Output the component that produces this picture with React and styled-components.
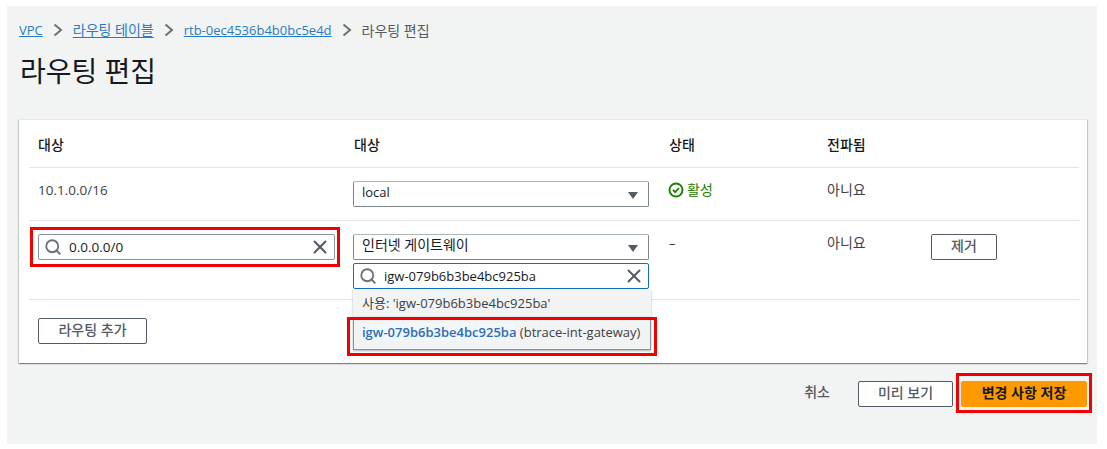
import styled, { createGlobalStyle } from "styled-components";
import { Search, X } from "lucide-react";

const GlobalStyle = createGlobalStyle`
    html, body {
        margin: 0;
        padding: 0;
        background: #fff;
    }
    body {
        font-family: "Open Sans", "Noto Sans CJK KR", sans-serif;
        font-size: 13px;
        color: #16191f;
    }
`;

const Page = styled.div`
    width: 1090px;
    height: 438px;
    margin: 6px 0 0 7px;
    padding: 15px 10px 0 12px;
    box-sizing: border-box;
    background: #f2f3f3;
`;

const Ko = styled.span`
    font-size: 14px;
    vertical-align: 1px;
`;

const Address = styled.span`
    font-size: 13.5px;
`;

const Crumbs = styled.nav`
    display: flex;
    align-items: center;
    height: 17px;
    font-size: 13px;
    color: #545b64;
`;

const CrumbLink = styled.a`
    color: #0f6fc0;
    text-decoration: underline;
    opacity: 0.9;
`;

const CrumbSep = styled.span`
    display: flex;
    width: 30px;
    justify-content: center;
`;

const Title = styled.h1`
    margin: 14px 0 0 1px;
    height: 39px;
    line-height: 39px;
    font-size: 28px;
    font-weight: 400;
    color: #16191f;
`;

const Card = styled.section`
    width: 1068px;
    height: 244px;
    margin-top: 28px;
    box-sizing: border-box;
    padding: 0 8px 0 10px;
    background: #fff;
    border-top: 1px solid #e5e7e8;
    box-shadow: 0 1px 1px 0 rgba(0, 28, 36, 0.3), 1px 1px 1px 0 rgba(0, 28, 36, 0.15),
        -1px 1px 1px 0 rgba(0, 28, 36, 0.15);
`;

const Row = styled.div`
    display: grid;
    grid-template-columns: 316px 315px 158px 104px 1fr;
    height: ${(p) => p.$height}px;
    padding: ${(p) => p.$top}px 0 0 9px;
    box-sizing: border-box;
    border-bottom: ${(p) => (p.$last ? "none" : "1px solid #e2e4e5")};
`;

const Head = styled.div`
    font-size: 14px;
    font-weight: 500;
    line-height: 18px;
    color: #16191f;
`;

const Cell = styled.div`
    position: relative;
    line-height: 18px;
    color: #3b4148;
`;

const Stack = styled.div`
    position: relative;
    display: flex;
    flex-direction: column;
    gap: 3px;
    width: 296px;
    margin-left: -1px;
`;

const Select = styled.div`
    display: flex;
    align-items: center;
    justify-content: space-between;
    height: 26px;
    padding: 0 10px 5px 8px;
    box-sizing: border-box;
    background: #fff;
    border: 1px solid #7d878a;
    border-top-color: #aab7b8;
    border-radius: 2px;
    color: #16191f;
`;

const Caret = styled.span`
    width: 0;
    height: 0;
    margin-top: 7px;
    border-left: 5px solid transparent;
    border-right: 5px solid transparent;
    border-top: 7px solid #545b64;
`;

const SearchBox = styled.div`
    display: flex;
    align-items: center;
    gap: 7px;
    width: ${(p) => (p.$focus ? "auto" : "297px")};
    height: 26px;
    padding: 0 3px 0 5px;
    box-sizing: border-box;
    background: #fff;
    border: 1px solid ${(p) => (p.$focus ? "#0f6fc0" : "#879596")};
    border-radius: 2px;
    color: #16191f;
`;

const SearchText = styled.span`
    flex: 1;
    padding-bottom: 1px;
`;

const Menu = styled.div`
    position: absolute;
    top: 55px;
    left: 0;
    width: 298px;
    z-index: 2;
    background: #fff;
    box-shadow: 0 1px 2px rgba(0, 28, 36, 0.35);
`;

const MenuHint = styled.div`
    height: 28px;
    line-height: 28px;
    padding-left: 9px;
    box-sizing: border-box;
    background: #f2f3f3;
    border-bottom: 1px solid #e2e4e5;
    color: #3b4148;
`;

const MenuOption = styled.div`
    height: 33px;
    line-height: 30px;
    padding-left: 8px;
    box-sizing: border-box;
    background: #f2f3f3;
    border: 1px solid #879596;
    border-top: none;
    color: #3b4148;
`;

const Match = styled.b`
    font-weight: 600;
    color: #2f6db5;
    background: #f1f8fd;
`;

const Status = styled.span`
    display: flex;
    align-items: center;
    gap: 3px;
    margin-left: -1px;
    color: #1d8102;
`;

const Button = styled.button`
    display: block;
    box-sizing: border-box;
    width: ${(p) => p.$width}px;
    height: 26px;
    padding: 0 0 6px;
    background: #fff;
    border: 1px solid #545b64;
    border-radius: 2px;
    font-family: inherit;
    font-size: 14px;
    font-weight: 500;
    color: #545b64;
`;

const Mark = styled.span`
    position: absolute;
    z-index: 3;
    top: ${(p) => p.$top}px;
    left: ${(p) => p.$left}px;
    width: ${(p) => p.$width}px;
    height: ${(p) => p.$height}px;
    box-sizing: border-box;
    border: 3px solid #f00000;
    pointer-events: none;
`;

const Footer = styled.footer`
    display: flex;
    align-items: center;
    justify-content: flex-end;
    width: 1068px;
    margin-top: 18px;
`;

const Cancel = styled.span`
    margin-right: 28px;
    padding-bottom: 6px;
    font-size: 14px;
    font-weight: 500;
    color: #545b64;
`;

const SaveWrap = styled.div`
    position: relative;
    margin-left: 8px;
`;

const SaveButton = styled.button`
    display: block;
    width: 126px;
    height: 26px;
    padding: 0 0 6px;
    background: #ff9900;
    border: 1px solid #ff9900;
    border-radius: 2px;
    font-family: inherit;
    font-size: 14px;
    font-weight: 600;
    color: #16191f;
`;

function CheckIcon() {
    return (
        <svg width="16" height="16" viewBox="0 0 16 16" fill="none" stroke="#1d8102" strokeWidth="2">
            <circle cx="8" cy="8" r="6.5" />
            <path d="M5 8l2.2 2.2L11 6" strokeWidth="1.8" />
        </svg>
    );
}

function Chevron() {
    return (
        <svg width="10" height="14" viewBox="0 0 10 14" fill="none" stroke="#687078" strokeWidth="2">
            <path d="M1.5 1.5L8 7l-6.5 5.5" />
        </svg>
    );
}

export default function App() {
    return (
        <>
            <GlobalStyle />
            <Page>
                <Crumbs>
                    <CrumbLink>VPC</CrumbLink>
                    <CrumbSep><Chevron /></CrumbSep>
                    <CrumbLink><Ko>라우팅 테이블</Ko></CrumbLink>
                    <CrumbSep><Chevron /></CrumbSep>
                    <CrumbLink>rtb-0ec4536b4b0bc5e4d</CrumbLink>
                    <CrumbSep><Chevron /></CrumbSep>
                    <Ko>라우팅 편집</Ko>
                </Crumbs>
                <Title>라우팅 편집</Title>

                <Card>
                    <Row $height={48} $top={16}>
                        <Head>대상</Head>
                        <Head>대상</Head>
                        <Head>상태</Head>
                        <Head>전파됨</Head>
                    </Row>
                    <Row $height={53} $top={13}>
                        <Cell><Address>10.1.0.0/16</Address></Cell>
                        <Cell>
                            <Stack>
                                <Select>local<Caret /></Select>
                            </Stack>
                        </Cell>
                        <Cell>
                            <Status><CheckIcon /><Ko>활성</Ko></Status>
                        </Cell>
                        <Cell><Ko>아니요</Ko></Cell>
                    </Row>
                    <Row $height={79} $top={13}>
                        <Cell>
                            <Mark $top={-7} $left={-8} $width={310} $height={40} />
                            <SearchBox>
                                <Search size={18} color="#687078" strokeWidth={2.4} />
                                <SearchText><Address>0.0.0.0/0</Address></SearchText>
                                <X size={22} color="#545b64" strokeWidth={2.2} />
                            </SearchBox>
                        </Cell>
                        <Cell>
                            <Stack>
                                <Select><Ko>인터넷 게이트웨이</Ko><Caret /></Select>
                                <SearchBox $focus>
                                    <Search size={18} color="#687078" strokeWidth={2.4} />
                                    <SearchText>igw-079b6b3be4bc925ba</SearchText>
                                    <X size={22} color="#545b64" strokeWidth={2.2} />
                                </SearchBox>
                                <Menu>
                                    <MenuHint>사용: 'igw-079b6b3be4bc925ba'</MenuHint>
                                    <MenuOption>
                                        <Match>igw-079b6b3be4bc925ba</Match> (btrace-int-gateway)
                                    </MenuOption>
                                </Menu>
                                <Mark $top={83} $left={-6} $width={310} $height={39} />
                            </Stack>
                        </Cell>
                        <Cell>–</Cell>
                        <Cell><Ko>아니요</Ko></Cell>
                        <Cell><Button $width={66}>제거</Button></Cell>
                    </Row>
                    <Row $height={64} $top={18} $last>
                        <Cell><Button $width={109}>라우팅 추가</Button></Cell>
                    </Row>
                </Card>

                <Footer>
                    <Cancel>취소</Cancel>
                    <Button $width={95}>미리 보기</Button>
                    <SaveWrap>
                        <Mark $top={-8} $left={-5} $width={136} $height={40} />
                        <SaveButton>변경 사항 저장</SaveButton>
                    </SaveWrap>
                </Footer>
            </Page>
        </>
    );
}
